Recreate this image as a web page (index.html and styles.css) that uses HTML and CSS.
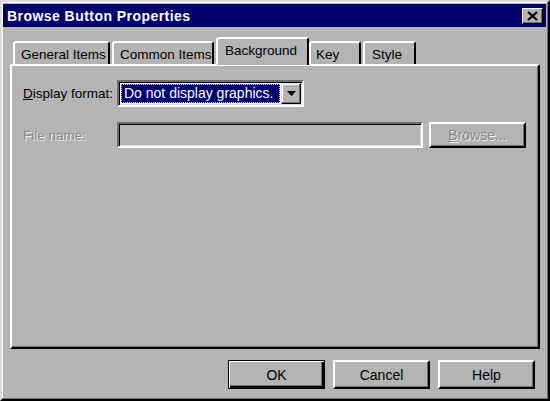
FILE: index.html
```html
<!DOCTYPE html>
<html>
<head>
<meta charset="utf-8">
<link rel="stylesheet" href="styles.css">
</head>
<body>
<div class="window">
  <div class="titlebar">
    <span class="title">Browse Button Properties</span>
    <span class="close"><svg width="11" height="10" viewBox="0 0 11 10"><path d="M1 1 L10 9 M10 1 L1 9" stroke="#000" stroke-width="2.2"/></svg></span>
  </div>
  <div class="body">
    <div class="tabs">
      <div class="tab t1">General Items</div>
      <div class="tab t2">Common Items</div>
      <div class="tab active">Background</div>
      <div class="tab t4">Key</div>
      <div class="tab t5">Style</div>
    </div>
    <div class="panel">
      <div class="row">
        <span class="label"><u>D</u>isplay format:</span>
        <div class="combo">
          <div class="combo-value"><span class="sel">Do not display graphics.</span></div>
          <div class="combo-btn"><svg width="9" height="5" viewBox="0 0 9 5"><path d="M0 0 H9 L4.5 5 Z" fill="#000"/></svg></div>
        </div>
      </div>
      <div class="row row2">
        <span class="label disabled">File name:</span>
        <div class="field"></div>
        <div class="btn small"><span class="disabled"><u>B</u>rowse...</span></div>
      </div>
    </div>
    <div class="footer">
      <div class="btn default">OK</div>
      <div class="btn">Cancel</div>
      <div class="btn">Help</div>
    </div>
  </div>
</div>
</body>
</html>
```
FILE: styles.css
```css
* { box-sizing: border-box; }
html, body { margin: 0; padding: 0; background: #b4b4b4; }
body { font-family: "Liberation Sans", Arial, sans-serif; font-size: 13.5px; color: #000; }

.window {
  width: 550px;
  height: 401px;
  background: #b4b4b4;
  border-style: solid;
  border-width: 2px;
  border-color: #dcdcdc #000 #000 #dcdcdc;
  box-shadow: inset -1px -1px 0 #6e6e6e, inset 1px 1px 0 #fff;
  padding: 2px 2px 2px 1px;
  display: flex;
  flex-direction: column;
}

.titlebar {
  height: 23px;
  background: #00006e;
  display: flex;
  align-items: center;
  justify-content: space-between;
  padding: 0 3px 0 4px;
}
.title { color: #fff; font-weight: bold; font-size: 14px; letter-spacing: 0.45px; }
.close {
  width: 21px;
  height: 16px;
  background: #b4b4b4;
  border-style: solid;
  border-width: 1px;
  border-color: #fff #000 #000 #fff;
  box-shadow: inset -1px -1px 0 #6e6e6e;
  display: flex;
  align-items: center;
  justify-content: center;
}

.body { flex: 1; display: flex; flex-direction: column; padding: 0 6px 0 7px; }

.tabs { display: flex; align-items: flex-end; margin-top: 10px; padding-left: 3px; height: 27px; position: relative; z-index: 2; }
.tab {
  height: 23px;
  padding: 4px 0 0 6px;
  border-style: solid;
  border-width: 2px 2px 0 2px;
  border-color: #fff #000 transparent #fff;
  border-radius: 3px 3px 0 0;
  background: #b4b4b4;
  white-space: nowrap;
}
.t1 { width: 97px; }
.t2 { width: 102px; margin-left: 2px; }
.active { width: 93px; height: 28px; margin: 0 0 -1px 2px; padding-top: 4px; padding-left: 7px; border-bottom: none; }
.t4 { width: 52px; margin-left: 0; padding-left: 5px; }
.t5 { width: 53px; margin-left: 2px; padding-left: 7px; }

.panel {
  height: 285px;
  border-style: solid;
  border-width: 2px;
  border-color: #fff #000 #000 #fff;
  box-shadow: inset -1px -1px 0 #6e6e6e;
  padding: 14px 0 0 11px;
  display: flex;
  flex-direction: column;
  gap: 15px;
}

.row { display: flex; align-items: center; height: 27px; }
.row2 { height: 26px; }
.label { width: 94px; white-space: nowrap; }
.disabled { color: #8a8a8a; text-shadow: 1px 1px 0 #f0f0f0; }

.combo {
  width: 187px;
  height: 27px;
  background: #fff;
  border-style: solid;
  border-width: 2px;
  border-color: #6e6e6e #fff #fff #6e6e6e;
  box-shadow: inset 1px 1px 0 #000, inset -1px -1px 0 #dcdcdc;
  display: flex;
  align-items: stretch;
  padding: 1px;
}
.combo-value { flex: 1; padding: 1px; display: flex; }
.sel {
  flex: 1;
  background: #00006e;
  color: #fff;
  outline: 1px dotted #ffff00;
  outline-offset: -1px;
  padding: 1px 0 0 3px;
  white-space: nowrap;
  overflow: hidden;
  font-size: 14px;
}
.combo-btn {
  width: 20px;
  background: #b4b4b4;
  border-style: solid;
  border-width: 1px;
  border-color: #dcdcdc #000 #000 #dcdcdc;
  box-shadow: inset -1px -1px 0 #6e6e6e, inset 1px 1px 0 #fff;
  display: flex;
  align-items: center;
  justify-content: center;
}

.field {
  width: 306px;
  height: 26px;
  background: #b4b4b4;
  border-style: solid;
  border-width: 2px;
  border-color: #6e6e6e #fff #fff #6e6e6e;
  box-shadow: inset 1px 1px 0 #000, inset -1px -1px 0 #dcdcdc;
}

.btn {
  width: 97px;
  height: 29px;
  background: #b4b4b4;
  border-style: solid;
  border-width: 2px;
  border-color: #fff #000 #000 #fff;
  box-shadow: inset -1px -1px 0 #6e6e6e;
  display: flex;
  align-items: center;
  justify-content: center;
  font-size: 14px;
}
.small { height: 26px; margin-left: 6px; }
.default { border: 1px solid #000; box-shadow: inset 1px 1px 0 #fff, inset -2px -2px 0 #000, inset -3px -3px 0 #6e6e6e; }

.footer { display: flex; justify-content: flex-end; gap: 8px; margin-top: 11px; padding-right: 5px; }
```
